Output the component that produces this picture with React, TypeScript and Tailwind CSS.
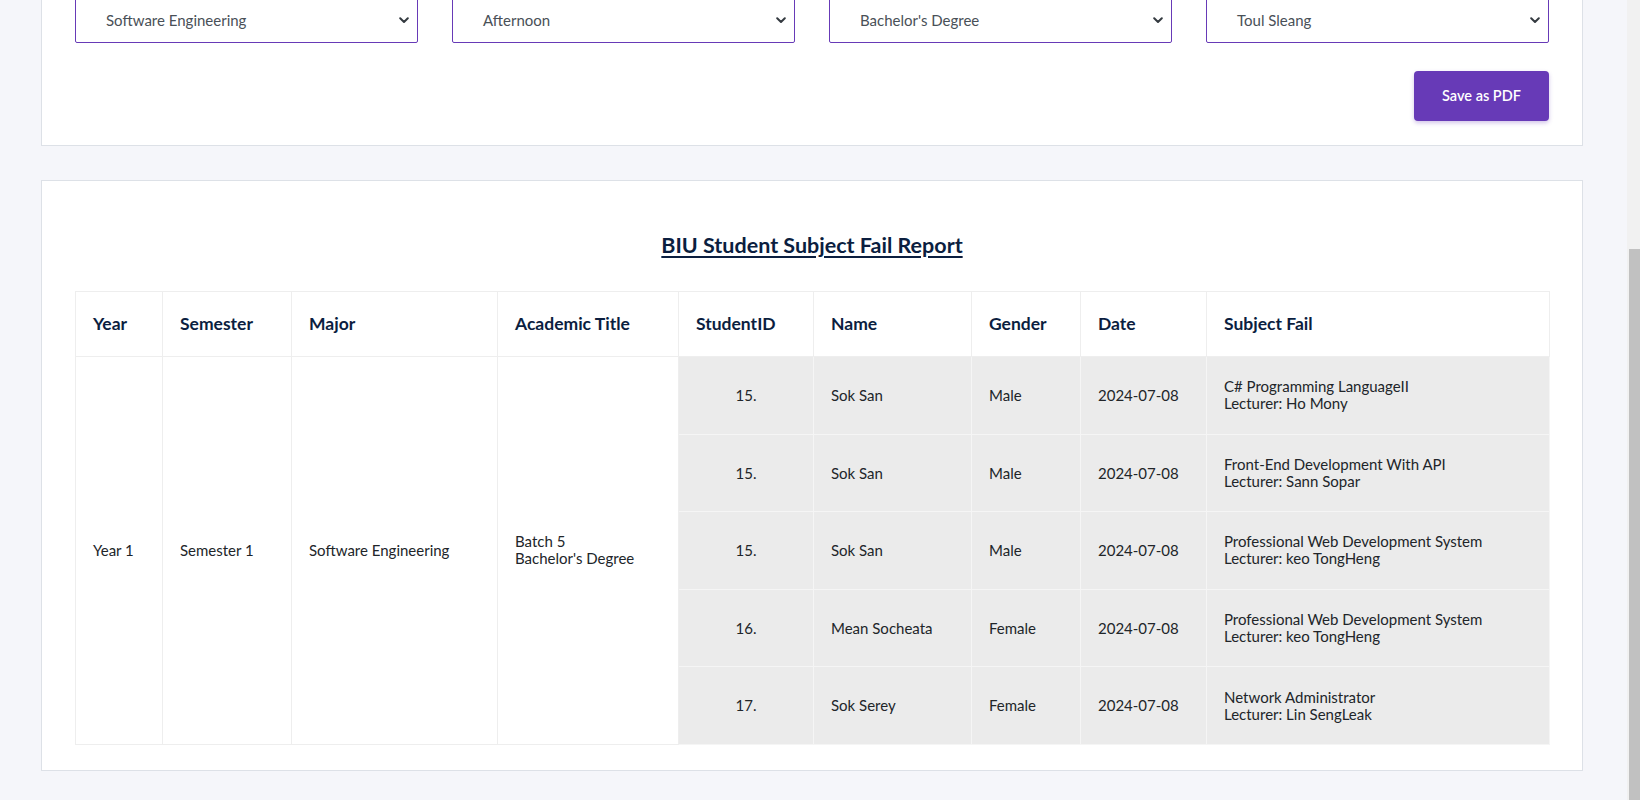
import React from "react";

const font = { fontFamily: "Lato, 'Open Sans', sans-serif" };

function Chevron() {
  return (
    <svg width="10" height="7" viewBox="0 0 10 7" className="shrink-0">
      <path d="M1.2 1.3 L5 5 L8.8 1.3" fill="none" stroke="#343a40" strokeWidth="2" strokeLinecap="round" strokeLinejoin="round" />
    </svg>
  );
}

function Select({ label }: { label: string }) {
  return (
    <div className="flex h-[46px] items-center justify-between rounded-[2px] border border-[#673ab7] bg-white pl-[30px] pr-[8px]">
      <span className="text-[15px] text-[#495057]">{label}</span>
      <Chevron />
    </div>
  );
}

const headers = ["Year", "Semester", "Major", "Academic Title", "StudentID", "Name", "Gender", "Date", "Subject Fail"];
const widths = [87, 129, 206, 181, 135, 158, 109, 126, 343];

const rows = [
  { id: "15.", name: "Sok San", gender: "Male", date: "2024-07-08", subject: "C# Programming LanguageII", lecturer: "Lecturer: Ho Mony" },
  { id: "15.", name: "Sok San", gender: "Male", date: "2024-07-08", subject: "Front-End Development With API", lecturer: "Lecturer: Sann Sopar" },
  { id: "15.", name: "Sok San", gender: "Male", date: "2024-07-08", subject: "Professional Web Development System", lecturer: "Lecturer: keo TongHeng" },
  { id: "16.", name: "Mean Socheata", gender: "Female", date: "2024-07-08", subject: "Professional Web Development System", lecturer: "Lecturer: keo TongHeng" },
  { id: "17.", name: "Sok Serey", gender: "Female", date: "2024-07-08", subject: "Network Administrator", lecturer: "Lecturer: Lin SengLeak" },
];

export default function App() {
  return (
    <div className="flex h-[800px] w-[1640px] overflow-hidden bg-[#f5f6fa]" style={font}>
      <div className="w-[1627px] shrink-0 overflow-hidden">
        <div className="mt-[-36px] pl-[41px] pr-[44px]">
          <div className="border border-[#dde1e7] bg-white px-[33px] pt-[32px] pb-[24px]">
            <div className="grid grid-cols-4 gap-x-[34px]">
              <Select label="Software Engineering" />
              <Select label="Afternoon" />
              <Select label="Bachelor's Degree" />
              <Select label="Toul Sleang" />
            </div>
            <div className="mt-[28px] flex justify-end">
              <button className="h-[50px] w-[135px] rounded-[4px] bg-[#673ab7] text-[14.5px] font-semibold text-white shadow-[0_2px_4px_rgba(103,58,183,0.3)]">
                Save as PDF
              </button>
            </div>
          </div>

          <div className="mt-[34px] border border-[#dde1e7] bg-white px-[33px] pb-[25px]">
            <div className="flex h-[110px] items-end justify-center pb-[33px]">
              <h2 className="text-[21.5px] font-bold leading-[26px] text-[#0b1e3f] underline decoration-2 underline-offset-[3px]">
                BIU Student Subject Fail Report
              </h2>
            </div>
            <table className="w-full table-fixed border-collapse">
              <colgroup>
                {widths.map((w, i) => (
                  <col key={i} style={{ width: w }} />
                ))}
              </colgroup>
              <thead>
                <tr className="h-[65px]">
                  {headers.map((h) => (
                    <th key={h} className="border border-[#eeeeee] px-[17px] text-left text-[17.5px] font-bold text-[#0b1e3f]">
                      {h}
                    </th>
                  ))}
                </tr>
              </thead>
              <tbody className="text-[15px] text-[#212529]">
                {rows.map((r, i) => (
                  <tr key={i} className="h-[77.6px]">
                    {i === 0 && (
                      <>
                        <td rowSpan={5} className="border border-[#eeeeee] px-[17px] align-middle">Year 1</td>
                        <td rowSpan={5} className="border border-[#eeeeee] px-[17px] align-middle">Semester 1</td>
                        <td rowSpan={5} className="border border-[#eeeeee] px-[17px] align-middle">Software Engineering</td>
                        <td rowSpan={5} className="border border-[#eeeeee] px-[17px] align-middle leading-[17px]">
                          Batch 5
                          <br />
                          Bachelor's Degree
                        </td>
                      </>
                    )}
                    <td className="border border-[#f5f5f5] bg-[#ebebeb] px-[17px] text-center">{r.id}</td>
                    <td className="border border-[#f5f5f5] bg-[#ebebeb] px-[17px]">{r.name}</td>
                    <td className="border border-[#f5f5f5] bg-[#ebebeb] px-[17px]">{r.gender}</td>
                    <td className="border border-[#f5f5f5] bg-[#ebebeb] px-[17px]">{r.date}</td>
                    <td className="border border-[#f5f5f5] bg-[#ebebeb] px-[17px] leading-[17px]">
                      {r.subject}
                      <br />
                      {r.lecturer}
                    </td>
                  </tr>
                ))}
              </tbody>
            </table>
          </div>
        </div>
      </div>
      <div className="h-[800px] w-[13px] shrink-0 bg-[#f1f1f1] pt-[249px]">
        <div className="ml-[2px] h-full w-[11px] bg-[#c1c1c1]" />
      </div>
    </div>
  );
}
